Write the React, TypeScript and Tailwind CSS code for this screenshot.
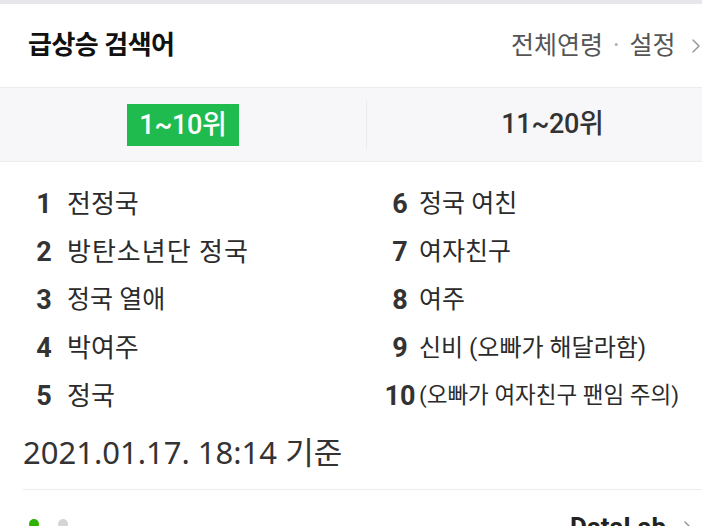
import { ChevronRight } from 'lucide-react';

type Keyword = { rank: number; text: string; size: string };

const left: Keyword[] = [
    { rank: 1, text: '전정국', size: 'text-[26px]' },
    { rank: 2, text: '방탄소년단 정국', size: 'text-[26px] tracking-[1px]' },
    { rank: 3, text: '정국 열애', size: 'text-[25px]' },
    { rank: 4, text: '박여주', size: 'text-[26px]' },
    { rank: 5, text: '정국', size: 'text-[26px]' },
];

const right: Keyword[] = [
    { rank: 6, text: '정국 여친', size: 'text-[25px]' },
    { rank: 7, text: '여자친구', size: 'text-[25px]' },
    { rank: 8, text: '여주', size: 'text-[25px]' },
    { rank: 9, text: '신비 (오빠가 해달라함)', size: 'text-[24px]' },
    { rank: 10, text: '(오빠가 여자친구 팬임 주의)', size: 'text-[22.5px]' },
];

const KeywordRow = ({ item, gap }: { item: Keyword; gap: string }) => (
    <li className="flex items-center h-[48px]">
        <span className="w-[34px] text-center text-[27px] font-bold text-[#333]">{item.rank}</span>
        <span className={`${gap} ${item.size} text-[#2b2b2b] whitespace-nowrap`}>{item.text}</span>
    </li>
);

export default function App() {
    return (
        <div className="w-[702px] h-[526px] overflow-hidden bg-white font-['Roboto','Noto_Sans_CJK_KR',sans-serif]">
            <div className="h-[4px] bg-[#e6e6eb]" />
            <div className="w-[734px]">
                <header className="flex items-center h-[84px] pl-[28px] border-b border-[#ececec]">
                    <h1 className="w-[483px] text-[26px] font-bold text-[#111] tracking-[-0.5px]">급상승 검색어</h1>
                    <div className="flex items-center text-[25px] text-[#555] whitespace-nowrap">
                        <span>전체연령</span>
                        <span className="mx-[10px] text-[#aaa]">·</span>
                        <span>설정</span>
                        <ChevronRight className="w-[24px] h-[24px] ml-[8px] text-[#999]" strokeWidth={1.5} />
                    </div>
                </header>

                <div className="grid grid-cols-2 h-[74px] bg-[#f7f7f9] border-b border-[#ececec]">
                    <div className="flex items-center justify-center border-r border-[#ebebee] my-[12px]">
                        <span className="bg-[#1fbb4f] text-white text-[27px] font-medium leading-[42px] px-[12px] tracking-[-0.3px]">1~10위</span>
                    </div>
                    <div className="flex items-center justify-center my-[12px]">
                        <span className="text-[27px] font-medium text-[#333] tracking-[-0.3px] pl-[4px]">11~20위</span>
                    </div>
                </div>

                <div className="grid grid-cols-[383px_1fr] pt-[18px]">
                    <ul className="pl-[27px]">
                        {left.map(item => <KeywordRow key={item.rank} item={item} gap="ml-[6px]" />)}
                    </ul>
                    <ul>
                        {right.map(item => <KeywordRow key={item.rank} item={item} gap="ml-[2px]" />)}
                    </ul>
                </div>

                <p className="mt-[12px] pl-[23px] h-[40px] leading-[40px] text-[31px] text-[#333] font-['Noto_Sans','Noto_Sans_CJK_KR',sans-serif]">
                    2021.01.17. 18:14 기준
                </p>

                <div className="mt-[17px] ml-[23px] border-t border-[#ececec]" />

                <div className="flex items-start pl-[29px] pt-[20px]">
                    <div className="flex items-center gap-[19px] pt-[9px] w-[541px]">
                        <span className="w-[10px] h-[10px] rounded-full bg-[#2db400]" />
                        <span className="w-[10px] h-[10px] rounded-full bg-[#d5d5d5]" />
                    </div>
                    <div className="flex items-center -mt-[2px] text-[26px] font-bold text-[#222]">
                        <span>DataLab</span>
                        <ChevronRight className="w-[24px] h-[24px] ml-[10px] text-[#999]" strokeWidth={1.5} />
                    </div>
                </div>
            </div>
        </div>
    );
}
